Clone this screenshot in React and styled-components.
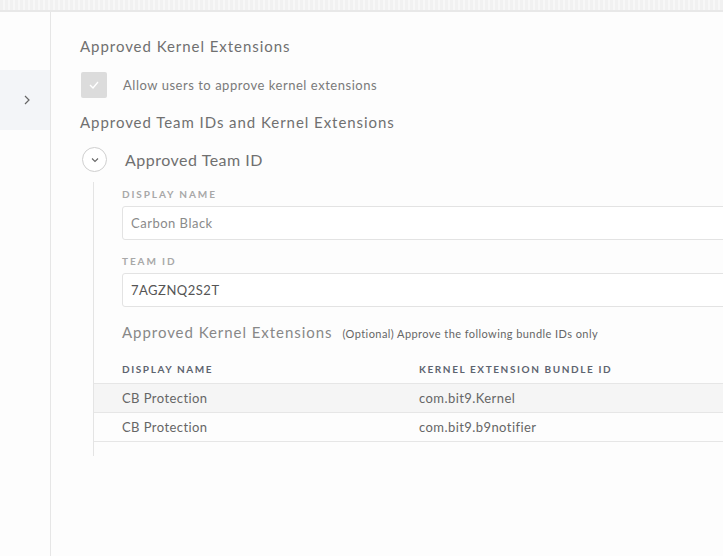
import React from 'react';
import styled, { createGlobalStyle } from 'styled-components';

const GlobalStyle = createGlobalStyle`
  body {
    margin: 0;
    background: #fdfdfd;
    font-family: Lato, "Liberation Sans", sans-serif;
    overflow: hidden;
  }
`;

const Page = styled.div`
  height: 556px;
  display: flex;
  flex-direction: column;
  overflow: hidden;
`;

const TopBar = styled.div`
  height: 10px;
  flex-shrink: 0;
  background: repeating-linear-gradient(90deg, #f1f1f1 0 3px, #f7f7f7 3px 5px);
  border-bottom: 2px solid #e8e8e8;
`;

const Body = styled.div`
  flex: 1;
  display: flex;
`;

const Sidebar = styled.aside`
  width: 50px;
  flex-shrink: 0;
  border-right: 1px solid #e6e6e6;
  padding-top: 58px;
`;

const SideItem = styled.div`
  height: 60px;
  background: #f3f5f8;
  display: flex;
  align-items: center;
  justify-content: center;
  padding-left: 4px;
  color: #666;
`;

const Main = styled.main`
  flex: 1;
  min-width: 800px;
  padding: 24px 0 0 29px;
`;

const Heading = styled.h2`
  margin: ${p => p.$top || 0}px 0 0;
  font-size: 15px;
  line-height: 20px;
  font-weight: 400;
  color: #707070;
  letter-spacing: 0.95px;
`;

const CheckRow = styled.label`
  display: flex;
  align-items: center;
  gap: 16px;
  margin: 16px 0 0 1px;
  font-size: 13px;
  color: #7a7a7a;
  letter-spacing: 0.53px;
`;

const CheckBox = styled.span`
  width: 26px;
  height: 26px;
  border-radius: 2px;
  background: #dcdcdc;
  display: flex;
  align-items: center;
  justify-content: center;
`;

const ToggleRow = styled.div`
  display: flex;
  align-items: center;
  gap: 18px;
  margin: 15px 0 0 2px;
  font-size: 16px;
  color: #707070;
  letter-spacing: 0.5px;
`;

const Circle = styled.span`
  width: 23px;
  height: 23px;
  border: 1px solid #cfcfcf;
  border-radius: 50%;
  background: #fff;
  display: flex;
  align-items: center;
  justify-content: center;
`;

const Block = styled.section`
  margin: 10px 0 0 13px;
  border-left: 1px solid #e4e4e4;
  padding-bottom: 14px;
`;

const Fields = styled.div`
  padding: 6px 0 0 28px;
`;

const FieldLabel = styled.div`
  margin-top: ${p => p.$top || 0}px;
  font-size: 10px;
  line-height: 12px;
  font-weight: 700;
  letter-spacing: 1.9px;
  color: #a8a8a8;
  text-transform: uppercase;
`;

const Input = styled.div`
  margin-top: 6px;
  height: 32px;
  border: 1px solid #e3e3e3;
  border-radius: 3px;
  background: #fff;
  display: flex;
  align-items: center;
  padding-left: 8px;
  font-size: 13px;
  letter-spacing: 0.5px;
  color: ${p => (p.$dark ? '#555' : '#8a8a8a')};
`;

const SubHead = styled.div`
  margin-top: 15px;
  display: flex;
  align-items: baseline;
  gap: 10px;
`;

const SubTitle = styled.span`
  font-size: 15px;
  line-height: 20px;
  color: #888;
  letter-spacing: 0.95px;
`;

const Hint = styled.span`
  font-size: 11px;
  color: #666;
  letter-spacing: 0.43px;
`;

const Table = styled.table`
  margin-top: 21px;
  width: 100%;
  border-collapse: collapse;
  table-layout: fixed;
`;

const Th = styled.th`
  text-align: left;
  padding: 0 0 8px 28px;
  width: ${p => p.$w || 'auto'};
  font-size: 10px;
  line-height: 12px;
  font-weight: 700;
  letter-spacing: 1.6px;
  color: #5d6470;
  text-transform: uppercase;
`;

const Tr = styled.tr`
  background: ${p => (p.$shade ? '#f5f5f5' : 'transparent')};
  border-top: 1px solid #e6e6e6;
  border-bottom: 1px solid #e6e6e6;
`;

const Td = styled.td`
  height: 28px;
  padding: 0 0 0 28px;
  font-size: 13px;
  color: #666;
  letter-spacing: 0.43px;
`;

const extensions = [
  { name: 'CB Protection', id: 'com.bit9.Kernel' },
  { name: 'CB Protection', id: 'com.bit9.b9notifier' },
];

export default function App() {
  return (
    <Page>
      <GlobalStyle />
      <TopBar />
      <Body>
        <Sidebar>
          <SideItem>
            <svg width="8" height="10" viewBox="0 0 8 10" fill="none" stroke="#666" strokeWidth="1.2">
              <path d="M2 1l4 4-4 4" />
            </svg>
          </SideItem>
        </Sidebar>
        <Main>
          <Heading>Approved Kernel Extensions</Heading>
          <CheckRow>
            <CheckBox>
              <svg width="10" height="8" viewBox="0 0 10 8" fill="none" stroke="#fff" strokeWidth="1.4">
                <path d="M1 4l3 3 5-6" />
              </svg>
            </CheckBox>
            Allow users to approve kernel extensions
          </CheckRow>
          <Heading $top={14}>Approved Team IDs and Kernel Extensions</Heading>
          <ToggleRow>
            <Circle>
              <svg width="8" height="6" viewBox="0 0 8 6" fill="none" stroke="#666" strokeWidth="1.1">
                <path d="M1 1.5l3 3 3-3" />
              </svg>
            </Circle>
            Approved Team ID
          </ToggleRow>
          <Block>
            <Fields>
              <FieldLabel>Display Name</FieldLabel>
              <Input>Carbon Black</Input>
              <FieldLabel $top={15}>Team ID</FieldLabel>
              <Input $dark>7AGZNQ2S2T</Input>
              <SubHead>
                <SubTitle>Approved Kernel Extensions</SubTitle>
                <Hint>(Optional) Approve the following bundle IDs only</Hint>
              </SubHead>
            </Fields>
            <Table>
              <thead>
                <tr>
                  <Th $w="269px">Display Name</Th>
                  <Th>Kernel Extension Bundle ID</Th>
                </tr>
              </thead>
              <tbody>
                {extensions.map((e, i) => (
                  <Tr key={e.id} $shade={i === 0}>
                    <Td>{e.name}</Td>
                    <Td>{e.id}</Td>
                  </Tr>
                ))}
              </tbody>
            </Table>
          </Block>
        </Main>
      </Body>
    </Page>
  );
}
